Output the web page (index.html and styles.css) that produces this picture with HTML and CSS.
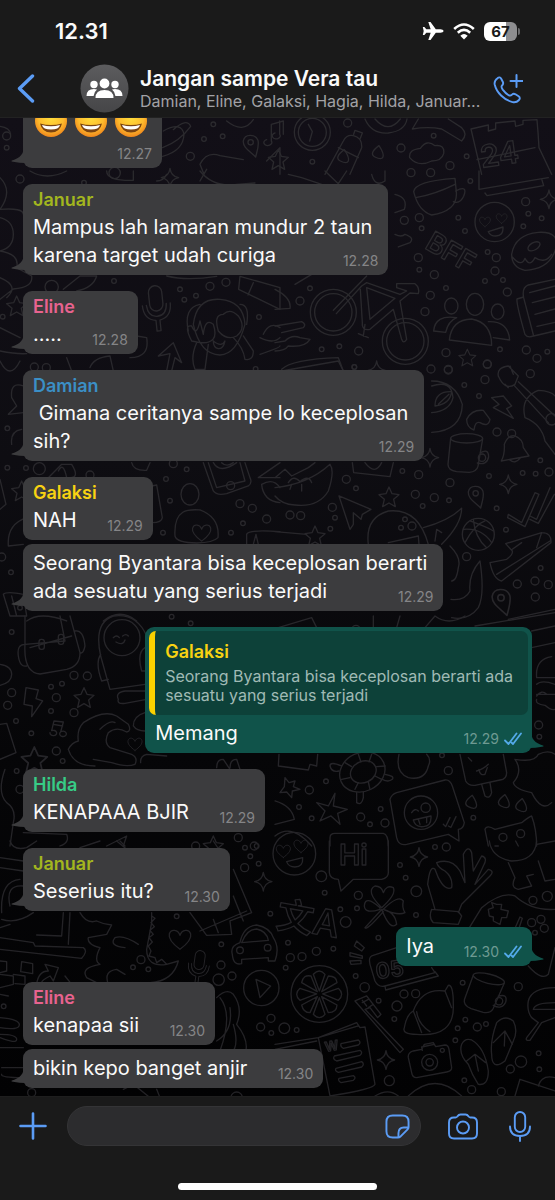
FILE: index.html
```html
<!DOCTYPE html>
<html lang="id">
<head>
<meta charset="utf-8">
<meta name="viewport" content="width=device-width, initial-scale=1">
<title>Jangan sampe Vera tau</title>
<link rel="stylesheet" href="styles.css">
</head>
<body>
<svg class="defs" aria-hidden="true">
  <defs>
    <radialGradient id="face" cx=".5" cy=".4" r=".6"><stop offset="0" stop-color="#ffdc3c"/><stop offset=".65" stop-color="#fdbb2d"/><stop offset="1" stop-color="#f0861c"/></radialGradient>
    <linearGradient id="disc" x1="0" y1="0" x2="0" y2="1"><stop offset="0" stop-color="#5c5c5e"/><stop offset="1" stop-color="#464648"/></linearGradient>
    <symbol id="grin" viewBox="0 0 34 34">
      <circle cx="17" cy="17" r="16" fill="url(#face)"/>
      <path d="M9 13q2-4 5 0M20 13q2-4 5 0" fill="none" stroke="#6b3a10" stroke-width="2" stroke-linecap="round"/>
      <path d="M6 19.500q11 3 22 0q-2 9-11 9T6 19.500z" fill="#7a4312"/>
      <path d="M8 21q9 2.500 18 0q-1 4.500-9 4.500t-9-4.500z" fill="#fff"/>
    </symbol>
    <symbol id="tail" viewBox="0 0 18 22"><path d="M13 0C13 8 9 12 1 14.500Q-.5 15.500 2 15.700Q9 17 14 17L18 20V0z"/></symbol>
    <symbol id="ticks" viewBox="0 0 18 14"><path d="M1 8.500L4.500 12L12.500 1.500M7.500 10.500L9 12L17 1.500" fill="none" stroke="#53a9e8" stroke-width="1.800" stroke-linecap="round" stroke-linejoin="round"/></symbol>
    <marker id="s" markerUnits="userSpaceOnUse" markerWidth="30" markerHeight="30" refX="15" refY="15" orient="0"><circle cx="15" cy="15" r="7" class="ring"/></marker>
    <marker id="m" markerUnits="userSpaceOnUse" markerWidth="40" markerHeight="40" refX="20" refY="20" orient="0"><circle cx="20" cy="20" r="12" class="ring"/></marker>
    <g id="star"><path d="M0-30L9-10L30-7L14 7L19 29L0 18L-19 29L-14 7L-30-7L-9-10z"/></g>
    <g id="spark"><path d="M0-28Q3-4 26 0Q3 4 0 28Q-3 4-26 0Q-3-4 0-28z"/></g>
    <g id="heart"><path d="M0 30C-20 15-36 0-32-16C-27-32-6-30 0-12C6-30 27-32 32-16C36 0 20 15 0 30z"/></g>
    <g id="pin"><path d="M15 36C0 20-24 8-22-12C-18-34 14-34 22-14C26 0 20 16 15 36z"/><circle cy="-8" r="8"/></g>
    <g id="mug"><ellipse cx="0" cy="-48" rx="48" ry="14"/><path d="M-48-48L-56 30Q-56 48-30 52L8 54Q30 52 34 36L48-46M40-4Q66-20 66 8Q60 34 32 26"/><circle cx="46" cy="10" r="11"/></g>
    <g id="mic"><rect x="-20" y="-66" width="40" height="76" rx="20"/><path d="M-42-10Q-42 32-6 38V70H6V38Q42 32 42-10M-30-10Q-28 26 0 26T30-10"/></g>
    <g id="drop"><path d="M0-20Q16 4 12 14T-12 14T0-20z"/></g>
  </defs>
</svg>
<div class="app">
  <header class="top">
    <div class="status">
      <span class="clock">12.31</span>
      <span class="signals">
        <svg width="22" height="20" viewBox="0 0 22 20" fill="#fff" aria-label="Airplane mode"><path d="M21.500 10c0 1-1.500 1.700-3 1.700h-4.700L8.500 19H6.300l2.400-7.300H4.300L2.400 14H.8L1.700 10L.8 6h1.600l1.900 2.300h4.400L6.300 1h2.200l5.300 7.300h4.700c1.500 0 3 .7 3 1.700z"/></svg>
        <svg width="22" height="17" viewBox="0 0 22 17" fill="none" stroke="#fff" stroke-width="2.600" aria-label="Wi-Fi"><path d="M1.200 6Q11-3 20.800 6M4.800 9.800Q11 4 17.200 9.800"/><path d="M11 16.500L7.300 12.700Q11 9.400 14.700 12.700z" fill="#fff" stroke="none"/></svg>
        <span class="battery">67</span>
      </span>
    </div>
    <div class="nav">
      <button class="icon back" aria-label="Back"><svg width="18" height="29" viewBox="0 0 18 29"><path d="M15.500 2L2.500 14.500L15.500 27" stroke-width="3.400"/></svg></button>
      <svg class="avatar" width="49" height="49" viewBox="0 0 49 49" aria-label="Group"><circle cx="24.500" cy="24.500" r="24" fill="url(#disc)"/><g fill="#fff"><circle cx="14" cy="20.500" r="3.700"/><circle cx="35" cy="20.500" r="3.700"/><circle cx="24.500" cy="19.500" r="4.900"/><path d="M15.500 34q0-8 9-8t9 8zM6.500 32q0-7 7.500-7q1.500 0 3 .6q-3 2.400-3.400 6.400zM42.500 32q0-7-7.500-7q-1.500 0-3 .6q3 2.400 3.400 6.400z"/></g></svg>
      <div class="heading"><h1>Jangan sampe Vera tau</h1><p>Damian, Eline, Galaksi, Hagia, Hilda, Januar...</p></div>
      <button class="icon call" aria-label="Add call"><svg width="30" height="30" viewBox="0 0 30 30"><path d="M4.500 4.200C6 2.800 7.300 3.300 8.200 4.800L10 8.200C10.600 9.700 9.800 10.800 8.800 11.800C8 13 8.600 14 9.700 15.600C11.500 18 13.600 20 15.600 21.200C17 22 18 21.600 19 20.600C20.200 19.500 21.200 19.600 22.500 20.300L25.600 22.300C27 23.300 27.200 24.600 26 26C24.200 28 22 28.600 19.600 28.100C11 26 3.500 18.500 1.700 10.500C1.200 8 2.300 5.800 4.500 4.200z" stroke-width="1.900"/><path d="M23.500 1V13M17.500 7H29.500" stroke-width="2"/></svg></button>
    </div>
  </header>

  <main class="chat">
    <svg class="doodles" viewBox="0 117 555 979" preserveAspectRatio="xMidYMin slice" aria-hidden="true">
      <g transform="scale(.3333)">
        <path d="M0 376Q30 380 32 400M490 390Q545 360 552 400Q550 450 488 466M488 440Q540 420 572 376Q560 350 520 386M680 360Q730 400 760 356M800 416a12 9 0 1 0 14 4V370L850 360V400M612 520L600 490Q620 450 660 464L730 476M620 505L600 540M800 480L840 440V520"/>
        <use href="#pin" x="752" y="432"/>
        <polyline class="dots" style="--dot:url(#s)" points="20,440 640,370 668,406 612,414"/>
        <polyline class="dots" style="--dot:url(#m)" points="20,405 571,466"/>
      </g>
      <g transform="translate(275 0) scale(.3333)">
        <circle cx="112" cy="394" r="54"/><circle cx="112" cy="394" r="42"/><path d="M100 370L112 392L104 420"/>
        <path d="M150 520L205 420Q215 400 235 404Q262 410 260 440L225 520M190 440L250 470M236 400L240 388L262 396L256 412M270 354Q290 400 340 396Q390 390 396 354M300 354Q340 400 376 354M430 354L412 384Q460 376 500 384L560 420Q580 400 560 380L520 354M404 470Q400 446 436 442Q456 414 480 434Q510 430 506 458Q500 480 470 480Q430 500 404 470zM588 384L640 372L640 390L662 384V366L720 360L722 376L744 370V358L786 356Q790 400 792 440L830 520M588 384L620 520M606 476L780 440M0 396a12 9 0 1 0 14 4V360"/>
        <use href="#drop" x="312" y="454"/><use href="#drop" x="208" y="466"/><use href="#star" x="10" y="476"/>
        <text x="620" y="500" font-size="92" transform="rotate(-8 620 500)">24</text>
        <polyline class="dots" style="--dot:url(#s)" points="112,482 476,404 575,466"/><polyline class="dots" style="--dot:url(#m)" points="218,366 378,441 525,494"/>
      </g>
      <g transform="translate(0 170) scale(.3333)">
        <path d="M0 20Q40 60 0 115Q70 110 70 130M0 140Q40 150 40 190T0 240Q60 250 50 290L95 315Q100 350 40 354L0 385M0 320Q60 345 20 380M90 0Q140 30 200 0M320 0Q320 30 400 28L400 0M500 10Q490 30 470 30M600 0Q640 50 710 40L765 36M190 355L240 315H290Q280 350 230 360M500 315Q560 330 650 316M0 540Q50 550 80 548M720 316L840 350V415L716 355zM760 335L744 372M0 470L60 500M390 560Q450 560 440 500L410 495M270 590Q280 560 330 555L340 600M200 560L215 600M580 460Q590 380 660 385Q730 390 735 460Q710 550 660 552Q600 550 580 460zM600 400Q550 410 565 480M720 400Q750 400 740 460M575 510Q550 460 575 465Q590 500 600 450L610 490Q615 440 640 460Q660 520 600 515zM655 480Q640 430 670 430Q690 410 715 435Q740 470 710 495Q680 510 655 480M590 515Q570 560 585 595H615L625 520M700 500Q730 530 735 565Q760 570 760 540L730 495M640 510Q665 530 675 510Q670 535 655 533Q640 530 640 510M500 600L510 548L475 555L520 515L545 575L525 560L515 600M780 550Q840 530 840 525M790 490Q810 450 840 470M780 500Q820 520 840 500"/>
        <use href="#mic" x="470" y="410" transform="rotate(-6 470 410)"/><use href="#spark" x="510" y="20"/><use href="#star" x="50" y="405"/>
        <circle cx="344" cy="6" r="17"/>
        <polyline class="dots" style="--dot:url(#s)" points="342,330 540,355 553,386 588,374 8,437 777,438 252,35"/><polyline class="dots" style="--dot:url(#m)" points="60,24 630,346 678,334 103,588 139,590"/><circle cx="155" cy="348" r="20"/>
      </g>
      <g transform="translate(275 170) scale(.3333)">
        <path d="M416 62Q420 30 540 22L544 62Q550 120 470 132Q430 120 416 62M422 80Q480 70 540 40M542 60Q580 40 566 76Q555 100 535 92M612 0V55L820 20M630 66L636 74L806 44L800 24M360 70Q400 80 388 115L360 125M360 190Q380 200 390 190Q420 200 405 215L370 228M40 10L80 20L140 40M150 0L190 38L215 0M290 10Q300 50 330 30V0"/>
        <circle cx="659" cy="153" r="59"/><use href="#heart" transform="translate(630 152) scale(.5)"/><use href="#heart" transform="translate(680 142) scale(.5)"/><path d="M640 182L684 168Q686 195 662 195Q646 195 640 182M710 250Q720 190 790 184Q860 180 840 240Q820 295 750 298Q710 290 710 250zM712 258Q740 290 750 262Q765 290 780 260Q810 280 830 250"/><ellipse cx="777" cy="226" rx="20" ry="11" transform="rotate(-30 777 226)"/>
        <text x="446" y="230" font-size="84" transform="rotate(30 446 230)">BFF</text>
        <circle cx="175" cy="424" r="69"/><circle cx="175" cy="424" r="56"/><circle cx="391" cy="511" r="69"/><circle cx="391" cy="511" r="56"/>
        <path d="M175 418L275 315M184 428L260 345L275 335L375 370L395 360L365 350V338H420Q435 350 430 368L405 366L375 390L395 505Q385 520 380 505L355 415L285 475Q260 480 262 455L256 355M275 350L360 382L285 445zM250 488L280 500M270 460L265 495"/>
        <ellipse cx="529" cy="405" rx="20" ry="24"/><ellipse cx="600" cy="400" rx="26" ry="33"/><ellipse cx="668" cy="422" rx="19" ry="23"/><path d="M523 507Q530 445 590 444Q650 455 650 523zM476 480Q480 430 545 440Q520 450 512 484zM640 452Q700 450 704 507L655 500"/>
        <path d="M840 325L760 342Q740 350 746 380L776 495L840 480M746 378L726 384Q724 400 750 490Q758 502 776 495M764 365L840 345M772 395L840 378M780 430L840 414M786 466L840 454M0 355Q50 380 45 412L0 415M0 465L80 452Q95 460 85 470L20 485M0 540Q30 540 40 525Q90 530 105 505L75 500Q50 490 30 510L0 515M20 595Q50 565 190 560L205 600M60 340L110 310"/>
        <use href="#spark" x="822" y="85"/><use href="#star" transform="translate(577 560) scale(.85)"/><use href="#spark" x="305" y="598"/>
        <polyline class="dots" style="--dot:url(#s)" points="586,30 440,172 570,180 550,140 760,128 800,142 745,166 638,243 433,296 630,330 684,327 513,351 105,352 140,535 193,526 675,535 238,588 817,542"/><polyline class="dots" style="--dot:url(#m)" points="388,148 433,140 752,92 430,260 664,260 478,311 660,300 466,373 450,422 697,363 75,390 251,540 513,545 637,579 754,537 786,562 520,595 408,5 467,5"/>
      </g>
      <g transform="translate(0 360) scale(.3333)">
        <path d="M0 0Q30 60 60 0M70 75Q30 60 35 110L50 135L25 160L70 155M35 250Q30 210 65 205M145 350L185 310H215Q240 350 210 350M175 330Q190 300 200 350M395 305Q400 330 440 328L450 305M610 305L640 390Q650 405 680 398L745 375Q758 365 750 350L735 305M625 305L650 380L735 360L720 305M0 355L18 430L0 445M25 555Q20 490 80 470M25 555L70 550M455 375L470 372L487 470Q485 485 457 485M640 305Q660 340 710 305M665 305Q680 320 700 305M775 350L840 305M775 350H840M785 370Q820 350 840 380M785 370Q790 420 840 425M740 550V520Q745 505 840 512M760 550L768 520L775 550M10 700Q20 690 70 700L80 765L30 765zM35 705L50 765M525 525C520 440 570 445 600 447Q660 470 654 530Q640 545 590 546Q530 545 525 525M80 780Q120 750 200 780M310 780Q360 740 410 780"/>
        <ellipse cx="570" cy="400" rx="27" ry="32"/><use href="#heart" transform="translate(605 515) scale(.85)"/><use href="#star" x="65" y="390"/>
        <polyline class="dots" style="--dot:url(#s)" points="22,202 22,320 78,321 498,354 560,325 510,419 489,515 693,515 729,487 33,634 767,24 60,740"/><polyline class="dots" style="--dot:url(#m)" points="270,342 520,308 720,428 757,442 800,474 5,588 692,374"/><circle cx="118" cy="323" r="18"/>
      </g>
      <g transform="translate(275 360) scale(.3333)">
        <path d="M20 30L190 0L205 30M670 45Q665 20 700 15L730 45L720 70Q690 90 670 45M705 15L715 40M690 70L700 80M730 62L840 165M718 74L820 185M750 170Q735 110 790 88Q830 90 840 105M750 170Q800 190 810 240L840 280M470 60Q540 60 562 130Q560 210 470 214M470 75Q530 55 534 110Q525 150 470 155M480 135Q480 90 530 92Q525 130 480 135M490 130L522 100M650 110L685 105L710 135L695 143L715 172L655 140L672 130zM575 175Q590 145 625 148L645 175Q640 200 615 185Q600 180 597 207Q575 200 575 175zM679 300Q690 280 688 250Q700 220 720 225Q745 235 745 260L762 285zM705 297Q720 310 735 292M0 380Q100 370 165 310Q180 330 160 390Q130 440 60 432Q20 430 0 405M0 350L30 325L50 345L100 320L120 305M40 365Q55 340 75 362Q100 340 110 365M45 385L50 370M80 390V370M232 305L236 335L345 347L355 305M270 305Q300 345 320 305M192 405L288 445L262 460L258 475L235 455V490L225 505zM700 460L740 485L780 395L792 400L750 497L698 470zM765 465L785 475L825 380M765 475L790 487L838 400M280 550Q270 470 340 450Q430 440 460 550M340 545L430 525L432 550M445 500Q520 480 560 442Q560 490 500 550M480 540L485 505L500 515M645 605L695 595Q715 580 712 570L692 548L800 515Q830 515 828 545L680 660Q655 655 645 605zM665 640L825 540M712 565L740 545M800 515L785 560M0 512L95 520M525 555Q560 590 550 620Q545 660 530 660M528 715Q570 720 585 690Q580 640 615 600Q630 700 610 740Q580 780 530 770M700 775L840 745"/>
        <circle cx="710" cy="218" r="12"/><circle cx="830" cy="175" r="17"/><use href="#mug" x="575" y="280"/><use href="#spark" x="465" y="290"/><use href="#spark" x="700" y="370"/><use href="#star" x="342" y="408"/><use href="#star" x="120" y="525"/><use href="#pin" x="602" y="405"/><use href="#pin" transform="translate(678 720) scale(1.200)"/>
        <circle cx="610" cy="520" r="48"/><path d="M565 505Q620 500 650 545M570 545Q600 490 630 480M595 475Q600 530 635 560M585 480Q640 500 655 510"/>
        <polyline class="dots" style="--dot:url(#s)" points="238,18 568,72 612,105 642,345 743,336 782,338 796,298 382,330 243,382 522,418 443,435 665,442 180,470 166,503 390,475 378,500 693,506 797,621"/><polyline class="dots" style="--dot:url(#m)" points="468,24 520,27 637,10 630,56 766,38 666,213 431,341 525,365 421,400 478,410 214,355 172,439 45,462 77,464 411,495 575,587 727,669 780,660 820,671 781,708 822,333"/>
      </g>
      <g transform="translate(0 615) scale(.3333)">
        <path d="M75 0V85L195 75L180 0M75 85Q70 170 120 174L200 160Q240 150 240 110L210 0M75 85Q50 85 55 120Q60 155 80 150M225 45Q250 40 255 90Q250 115 240 110M90 95L215 60M302 120Q280 20 340 0Q410-10 440 60M302 120L330 220L435 205M302 115Q285 140 305 195L325 190M435 95Q410 110 425 165H435M355 250Q345 230 375 225H440M375 262Q350 265 355 250M375 262L440 250M340 65Q350 55 358 65M368 60Q378 52 385 60M348 78Q370 90 375 72M78 215L115 222L108 248L128 255L95 302L97 270L72 265zM150 350a10 8 0 1 0 5-6L162 315L190 318L182 348a10 8 0 1 0 4-2M160 325L188 330M285 450Q220 450 205 400Q215 380 235 375Q230 340 250 320Q310 280 350 300L385 325Q395 345 380 348Q350 330 325 350Q310 380 330 395L395 415Q415 425 405 445Q380 455 335 440L280 430M300 340Q330 310 345 320M435 290Q400 300 400 330Q410 345 435 345M422 440Q420 420 440 415L500 420M0 145Q35 150 35 175T0 208M0 325L20 322L48 410L0 430M15 460Q-10 530 20 560Q50 580 40 620L30 690M70 650L200 655Q210 680 180 690M320 690L380 660L370 690M650 455Q650 430 670 430L690 460M690 455Q690 430 710 430L720 460"/>
        <rect x="117" y="70" width="16" height="30" rx="7"/><rect x="175" y="55" width="16" height="30" rx="7"/><circle cx="366" cy="65" r="54"/>
        <use href="#star" x="252" y="245"/><use href="#star" transform="translate(103 432) scale(1.300)"/><use href="#heart" transform="translate(405 384) scale(.65)"/><use href="#star" x="640" y="690"/>
        <polyline class="dots" style="--dot:url(#s)" points="35,48 153,212 186,203 153,285 48,315 94,352 188,435 50,465 515,2 572,22 770,690"/><polyline class="dots" style="--dot:url(#m)" points="35,230 23,268 222,178 262,180 169,245 222,290 169,405 715,665 60,520"/>
      </g>
      <g transform="translate(275 615) scale(.3333)">
        <path d="M10 35L110 5L125 35M295 35V0M365 35L375 0M450 35L480 0Q520 30 570 0M600 30L840-10M770 45L840 30M770 95L840 80M785 185Q780 130 830 122M785 185H840M785 205Q800 190 840 205M785 235H840M785 240Q800 220 815 235M785 250Q780 265 810 268Q830 285 840 280M12 415L10 450L100 462L105 445L125 450L128 415M372 415Q360 470 400 485Q450 495 460 450Q470 430 455 415M555 415L572 495Q580 510 600 508L675 492Q695 490 695 470L685 415M605 465Q625 460 640 445M612 460Q615 480 630 475L637 455M580 425L590 435M620 505L630 540Q645 550 650 530L645 500M720 430Q780 440 790 415Q820 400 840 415M720 430Q745 465 715 500Q720 520 770 530Q800 590 830 560M345 550Q350 535 365 530L510 492Q525 490 532 510L568 620Q565 640 550 640L552 675L520 655L395 685Q370 690 365 665zM410 590Q420 575 430 585M415 612L468 600Q470 630 445 632Q420 635 415 612M430 610L435 625M455 605V620M505 625L512 632L525 605M520 630L528 634L543 602M165 690V665Q165 652 180 652H325Q340 655 340 690M0 555Q50 570 58 610L0 625M0 660Q50 620 110 690M640 690L630 640Q635 625 660 640L740 620Q765 600 770 600Q785 640 785 690M722 675L730 690"/>
        <ellipse cx="262" cy="468" rx="70" ry="58" transform="rotate(-25 262 468)"/><ellipse cx="265" cy="468" rx="40" ry="32" transform="rotate(-25 265 468)"/><path d="M165 450Q165 435 200 450M165 450Q170 470 192 465M330 475Q360 480 352 490Q340 500 322 490M245 530V560Q260 570 265 545V528M210 440L230 452M200 490L225 485M240 520L250 500M285 520L280 498M320 490L300 480M330 450L305 452M250 415L258 438M290 415L282 438"/>
        <path d="M30 485L42 500L60 495L55 512L75 520L52 525L50 545L35 528L15 530L28 512zM180 532L175 570L217 580L188 592L195 625L168 600L135 615L150 585L125 560L160 570z"/>
        <circle cx="438" cy="590" r="50"/><circle cx="452" cy="575" r="14"/><circle cx="684" cy="664" r="12"/><circle cx="737" cy="653" r="12"/>
        <use href="#drop" x="592" y="558"/><use href="#drop" x="690" y="556"/><use href="#drop" x="742" y="568"/>
        <polyline class="dots" style="--dot:url(#s)" points="153,496 72,573 110,607 285,625 317,579 595,605 501,418 793,362"/><polyline class="dots" style="--dot:url(#m)" points="103,522 520,464 330,621 791,327 257,603 243,40"/>
      </g>
      <g transform="translate(0 840) scale(.3333)">
        <path d="M30 0Q40 30 80 20L110 0M240 20L300 0M350 0L380 25M360 0L375 15M0 50L70 60M0 80L70 90M0 290L100 305L105 315L250 320Q265 330 245 352L0 325M190 215L185 285L110 282M210 215L205 310M5 215Q0 120 60 115M30 195Q15 130 70 135M5 235Q50 250 100 215M0 260L30 250M240 215Q260 250 290 240Q310 250 335 252L320 280L265 290Q260 310 300 320Q280 360 300 370Q240 380 260 410L300 430M415 310Q370 280 345 290Q325 315 375 320M325 430Q310 390 350 385L375 400M455 215V245L440 325Q440 380 500 370L535 360Q520 420 450 425M455 225L465 232L453 245L463 257L450 268L460 280L447 290L457 303L445 315L453 330L447 345L465 350L470 365L485 355L500 370M0 360L20 362V390L0 395M65 362L98 368V398L62 392zM0 400L40 405V430L0 440M40 400L75 405V430L45 428M0 460L25 465M135 370L175 380L160 420L150 405Q120 420 125 430H110Q115 390 145 390zM195 405L215 430M0 530Q60 535 58 552T0 560M0 580Q50 580 50 595T0 590M0 620H70M5 680H70M5 700Q0 710 70 710M640 0L660 30M700 85L755 215L690 240L695 280L620 283L570 215M600 270L740 210M640 235L655 275M700 165L730 240M650 470Q680 440 700 460Q730 500 710 550Q750 600 735 640M700 550Q720 620 690 640M660 470Q700 520 660 630M650 600Q700 570 690 500M80 430L130 435M370 745L400 730L450 770M470 745L480 770"/>
        <use href="#heart" x="540" y="295"/><use href="#mic" transform="translate(596 378) scale(.75) rotate(8)"/><use href="#spark" x="790" y="122"/>
        <circle cx="784" cy="441" r="53"/><path d="M768 415L812 435L780 470zM697 340Q690 315 720 305Q730 255 770 252Q810 260 820 290Q840 320 825 360H805V350L725 355V368Q700 375 697 340zM725 305Q740 265 770 264Q800 270 805 298z"/><circle cx="720" cy="328" r="10"/><circle cx="803" cy="320" r="10"/>
        <polyline class="dots" style="--dot:url(#s)" points="530,226 399,379 445,385 751,46 776,68 811,218 664,310 11,496 814,576 735,20"/><polyline class="dots" style="--dot:url(#m)" points="423,356 663,372 696,405 734,80 782,558 763,15 587,15 813,532 95,755"/><circle cx="656" cy="416" r="17"/><circle cx="710" cy="770" r="17"/>
      </g>
      <g transform="translate(275 840) scale(.3333)">
        <circle cx="58" cy="38" r="64"/><use href="#heart" transform="translate(25 30) scale(.65)"/><use href="#heart" transform="translate(78 15) scale(.65)"/><path d="M35 62L83 50Q85 78 60 78Q40 78 35 62M163 0V95Q165 115 190 115L198 150L235 115H320Q340 110 340 95V0"/>
        <text x="192" y="72" font-size="86">Hi</text><text x="0" y="258" font-size="110" transform="rotate(10 0 258)">文A</text><text x="305" y="415" font-size="66" transform="rotate(-8 305 415)">05</text><text x="152" y="632" font-size="40" transform="rotate(-10 152 632)">W</text>
        <path d="M320 200Q270 150 300 135Q320 135 325 155Q335 130 355 140Q365 160 320 200zM325 205Q370 160 385 180Q380 200 390 215Q370 225 325 205zM320 205Q345 270 365 250Q360 210 320 205zM315 200Q270 160 268 195Q270 220 315 205zM318 208L270 260Q275 270 325 212"/>
        <path d="M480 205L458 130Q465 70 480 85L490 110Q510 150 530 140Q535 110 510 90Q490 80 485 65Q530 50 555 90L570 125M570 125L565 40Q580 10 590 35L595 90L620 45Q640 50 625 75L600 130L640 85Q660 90 645 105L560 190L550 215M470 205L550 212L560 225L550 250L475 245Q460 230 470 205M643 0Q650 50 710 60Q780 60 785 0M700 65L720 110Q705 140 730 145L770 135L755 105L775 100M790 60L810 120L840 115M785 10L840 0M660 15H670M580 265L620 200Q680 150 720 165Q770 210 840 205M760 375Q800 420 820 400L840 320M640 205L655 200L650 185L665 190L680 190L678 205L700 210L695 230L680 230L675 250L655 240L655 228L643 225zM720 262L735 228L742 232L732 262"/>
        <path d="M365 320L290 345Q280 350 285 370L300 420Q310 440 330 435L480 395L470 380M330 435L332 447L490 405L480 392M245 300L268 320L260 330L238 315zM225 335L262 345V352L225 345zM225 360L258 358V368L228 370z"/>
        <circle cx="133" cy="459" r="85"/><path d="M133 450L115 400Q133 380 150 400zM133 470L115 520Q133 540 150 520zM125 459L75 442Q55 459 75 478zM143 459L190 442Q210 459 190 478zM127 452L80 425Q85 400 108 405zM140 452L160 405Q185 405 186 425zM127 467L80 492Q85 515 105 515zM140 467L186 492Q185 515 160 515z"/>
        <path d="M240 480L275 465L318 520L308 530L285 500L270 505L385 625L375 635zM262 478L275 495M280 475L262 485M295 490L280 500M388 560Q380 580 425 580Q540 590 535 490Q535 430 520 433L510 450Q440 440 415 510Q395 520 388 560zM415 510L440 575M510 450L530 500M425 512Q430 550 465 572M0 610L130 590L165 765M0 625L125 600M130 590L245 545L255 560L270 558L300 730Q295 745 165 765M130 590L250 555M198 608L250 597Q260 605 250 612L205 622Q195 618 198 608zM178 645L255 628Q265 635 255 643L185 660Q172 655 178 645zM183 682L260 662Q270 670 260 678L190 694Q178 690 183 682zM192 712L235 704Q245 710 235 718L198 725Q188 720 192 712zM400 650Q398 635 415 630L440 625L448 610L475 605L482 617L510 612Q520 612 522 625L530 680Q530 690 515 693L425 710Q412 710 410 695zM442 628L440 618L478 610"/>
        <circle cx="464" cy="664" r="24"/><circle cx="464" cy="664" r="11"/><circle cx="502" cy="628" r="6"/>
        <path d="M560 610Q570 590 590 597Q630 620 640 690Q640 735 610 730Q590 700 580 670Q550 640 560 610zM575 660L600 640L632 665M600 640L610 690M665 545Q690 520 715 540Q730 570 715 600L690 660Q650 690 650 640Q645 600 665 545zM655 605L690 570L712 610M690 570L688 615"/>
        <use href="#mug" transform="translate(630 460) rotate(14)"/><path d="M840 440Q770 440 760 480Q755 510 770 530L790 545L755 590Q750 600 765 598L800 545L840 530M840 485Q780 485 775 505H840M735 715L840 750M735 715L720 765M790 735Q800 700 840 710M400 765Q480 690 560 765M300 765Q340 740 370 765"/>
        <use href="#spark" x="432" y="48"/><use href="#spark" x="333" y="657"/>
        <polyline class="dots" style="--dot:url(#s)" points="480,18 375,72 392,110 149,155 196,205 246,202 423,222 39,305 32,380 175,323 310,290 242,405 311,479 358,534 563,425 571,536 541,598 548,562 633,549 568,718 791,637 793,685 65,567 780,275"/><polyline class="dots" style="--dot:url(#m)" points="514,18 250,163 774,178 46,350 81,347 124,331 387,459 422,458 730,437 607,558 706,684 590,746 679,752 770,245 798,235 808,262"/><circle cx="139" cy="106" r="16"/><circle cx="424" cy="151" r="16"/><circle cx="212" cy="243" r="16"/><circle cx="269" cy="439" r="14"/><circle cx="366" cy="495" r="15"/><circle cx="28" cy="562" r="16"/><circle cx="738" cy="662" r="17"/><circle cx="343" cy="719" r="15"/><circle cx="817" cy="166" r="15"/>
      </g>
    </svg>

    <div class="messages">
      <article class="bubble in">
        <div class="body"><p class="text faces" role="img" aria-label="😄😄😄"><svg><use href="#grin"/></svg><svg><use href="#grin"/></svg><svg><use href="#grin"/></svg></p><time class="time">12.27</time></div>
        <svg class="tail"><use href="#tail"/></svg>
      </article>
      <article class="bubble in">
        <h2 class="name lime">Januar</h2>
        <div class="body"><p class="text">Mampus lah lamaran mundur 2 taun<br>karena target udah curiga</p><time class="time">12.28</time></div>
        <svg class="tail"><use href="#tail"/></svg>
      </article>
      <article class="bubble in">
        <h2 class="name pink">Eline</h2>
        <div class="body"><p class="text">.....</p><time class="time">12.28</time></div>
        <svg class="tail"><use href="#tail"/></svg>
      </article>
      <article class="bubble in">
        <h2 class="name blue">Damian</h2>
        <div class="body"><p class="text">&nbsp;Gimana ceritanya sampe lo keceplosan<br>sih?</p><time class="time">12.29</time></div>
        <svg class="tail"><use href="#tail"/></svg>
      </article>
      <article class="bubble in">
        <h2 class="name yellow">Galaksi</h2>
        <div class="body"><p class="text">NAH</p><time class="time">12.29</time></div>
      </article>
      <article class="bubble in follow">
        <div class="body"><p class="text">Seorang Byantara bisa keceplosan berarti<br>ada sesuatu yang serius terjadi</p><time class="time">12.29</time></div>
        <svg class="tail"><use href="#tail"/></svg>
      </article>
      <article class="bubble out reply">
        <blockquote class="quote">
          <h2 class="name yellow">Galaksi</h2>
          <p>Seorang Byantara bisa keceplosan berarti ada<br>sesuatu yang serius terjadi</p>
        </blockquote>
        <div class="body"><p class="text">Memang</p><time class="time">12.29 <svg class="ticks"><use href="#ticks"/></svg></time></div>
        <svg class="tail"><use href="#tail"/></svg>
      </article>
      <article class="bubble in">
        <h2 class="name green">Hilda</h2>
        <div class="body"><p class="text">KENAPAAA BJIR</p><time class="time">12.29</time></div>
        <svg class="tail"><use href="#tail"/></svg>
      </article>
      <article class="bubble in">
        <h2 class="name lime">Januar</h2>
        <div class="body"><p class="text">Seserius itu?</p><time class="time">12.30</time></div>
        <svg class="tail"><use href="#tail"/></svg>
      </article>
      <article class="bubble out">
        <div class="body"><p class="text">Iya</p><time class="time">12.30 <svg class="ticks"><use href="#ticks"/></svg></time></div>
        <svg class="tail"><use href="#tail"/></svg>
      </article>
      <article class="bubble in">
        <h2 class="name pink">Eline</h2>
        <div class="body"><p class="text">kenapaa sii</p><time class="time">12.30</time></div>
      </article>
      <article class="bubble in follow">
        <div class="body"><p class="text">bikin kepo banget anjir</p><time class="time">12.30</time></div>
        <svg class="tail"><use href="#tail"/></svg>
      </article>
    </div>
  </main>

  <footer class="composer">
    <div class="tools">
      <button class="icon plus" aria-label="Attach"><svg width="28" height="28" viewBox="0 0 28 28"><path d="M14 1.500V26.500M1.500 14H26.500" stroke-width="2.600"/></svg></button>
      <div class="field">
        <input type="text" aria-label="Message">
        <button class="icon" aria-label="Stickers"><svg width="25" height="25" viewBox="0 0 26 26"><path d="M8 1.500H18Q24.500 1.500 24.500 8V13.500Q24.500 15 23.500 16L16 23.500Q15 24.500 13.500 24.500H8Q1.500 24.500 1.500 18V8Q1.500 1.500 8 1.500zM14 24V20Q14 14 19.500 14H24.500" stroke-width="2"/></svg></button>
      </div>
      <button class="icon" aria-label="Camera"><svg width="30" height="27" viewBox="0 0 30 27"><path d="M6 4.500H7.500Q8.500 4.500 9.300 3.500Q10.700 1.500 12.500 1.500H17.500Q19.300 1.500 20.700 3.500Q21.500 4.500 22.500 4.500H24Q29 4.500 29 9.500V20.500Q29 25.500 24 25.500H6Q1 25.500 1 20.500V9.500Q1 4.500 6 4.500z" stroke-width="1.900"/><circle cx="15" cy="14.500" r="6" stroke-width="1.900"/></svg></button>
      <button class="icon" aria-label="Voice message"><svg width="22" height="31" viewBox="0 0 22 31"><rect x="5.800" y="1" width="10.400" height="20" rx="5.200" stroke-width="1.900"/><path d="M1 15.500Q1 25 11 25T21 15.500M11 25V30" stroke-width="1.900"/></svg></button>
    </div>
    <div class="home"></div>
  </footer>
</div>
</body>
</html>
```
FILE: styles.css
```css
* { box-sizing: border-box; margin: 0; padding: 0; }

body {
  background: #1a1a1a;
  color: #fafafa;
  font-family: Inter, "Liberation Sans", sans-serif;
  font-variant-ligatures: no-contextual;
}

.defs { position: absolute; width: 0; height: 0; }

.app { display: flex; flex-direction: column; height: 100vh; }

.icon {
  display: flex;
  align-items: center;
  justify-content: center;
  border: 0;
  background: none;
}

.icon svg {
  fill: none;
  stroke: #5b9cf5;
  stroke-linecap: round;
  stroke-linejoin: round;
}

/* header */
.top { flex: none; background: #1a1a1a; border-bottom: 1px solid #222; }

.status {
  display: flex;
  justify-content: space-between;
  align-items: center;
  height: 60px;
  padding: 2px 38px 0 55px;
}

.clock { font-size: 22px; font-weight: 600; }
.signals { display: flex; align-items: center; gap: 9px; }

.battery {
  position: relative;
  width: 33px;
  height: 19px;
  border-radius: 6px;
  background: linear-gradient(to right, #fff 67%, #8e8e90 67%);
  color: #1a1a1a;
  font-size: 15px;
  font-weight: 700;
  line-height: 19px;
  text-align: center;
}

.battery::after {
  content: "";
  position: absolute;
  top: 6px;
  right: -3px;
  width: 2px;
  height: 7px;
  border-radius: 0 2px 2px 0;
  background: #6a6a6c;
}

.nav { display: flex; align-items: center; height: 57px; padding: 0 32px 0 17px; }
.avatar { flex: none; margin: 0 11px 0 45px; }
.heading { flex: 1; min-width: 0; white-space: nowrap; }
.heading h1 { font-size: 21px; font-weight: 600; line-height: 24px; }
.heading p { overflow: hidden; color: #a2a2a6; font-size: 16px; line-height: 20px; }

/* conversation */
.chat {
  position: relative;
  flex: 1;
  min-height: 0;
  overflow: hidden;
  background: linear-gradient(#120f17, #0e0d12 35%, #060608 65%, #020203);
}

.doodles {
  position: absolute;
  inset: 0;
  width: 100%;
  height: 100%;
  fill: none;
  stroke: #2b2a2e;
  stroke-width: 4;
  stroke-linejoin: round;
  stroke-linecap: round;
  mask-image: linear-gradient(#000, rgba(0, 0, 0, 0.8));
}

.doodles text {
  font-family: Inter, "Noto Sans CJK SC", sans-serif;
  font-weight: 600;
}

.ring { fill: none; stroke: #2b2a2e; stroke-width: 4; }
.dots { stroke: none; marker: var(--dot); }

.messages {
  position: relative;
  display: flex;
  flex-direction: column;
  justify-content: flex-end;
  gap: 16px;
  height: 100%;
  padding: 0 23px 8px;
}

.bubble {
  --fill: #3c3c3e;
  position: relative;
  flex: none;
  align-self: flex-start;
  padding: 5px 10px 6px;
  border-radius: 9px;
  background: var(--fill);
}

.bubble.out { --fill: #10534a; align-self: flex-end; }
.bubble.follow { margin-top: -12px; }
.bubble:has(> .name) { padding-top: 3px; }

.tail {
  position: absolute;
  left: -12px;
  bottom: 0;
  width: 18px;
  height: 22px;
  fill: var(--fill);
}

.out .tail { left: auto; right: -12px; transform: scaleX(-1); }

.name { font-size: 18px; font-weight: 600; line-height: 26px; }
.lime { color: #a3b61e; }
.pink { color: #e8638f; }
.blue { color: #3b8fc6; }
.yellow { color: #f8d212; }
.green { color: #37cc86; }

.body { display: grid; }
.text, .time { grid-area: 1 / 1; }
.text { padding-right: 6px; font-size: 20px; line-height: 28px; }
.text::after { content: ""; display: inline-block; width: 60px; }
.out .text::after { width: 82px; }

.time {
  display: flex;
  align-items: center;
  gap: 5px;
  align-self: end;
  justify-self: end;
  color: #858587;
  font-size: 14px;
  line-height: 16px;
}

.out .time { color: #6e9a92; }
.ticks { width: 18px; height: 14px; }

.faces { display: flex; gap: 6px; padding: 0 4px 24px 1px; }
.faces::after { content: none; }
.faces svg { width: 34px; height: 34px; }

.reply { padding: 4px 4px 6px; }
.reply .body { padding: 4px 6px 0; }

.quote {
  padding: 8px 15px 10px 10px;
  border-left: 6px solid #fad100;
  border-radius: 7px;
  background: #0d4139;
}

.quote .name { margin-bottom: 2px; }
.quote p { color: #a0bab5; font-size: 16px; line-height: 19px; }

/* composer */
.composer { flex: none; background: #1a1a1a; border-top: 1px solid #1e1e1e; }

.tools {
  display: flex;
  align-items: center;
  gap: 31px;
  padding: 9px 24px 0 19px;
}

.plus { margin-right: -11px; }

.field {
  display: flex;
  align-items: center;
  flex: 1;
  min-width: 0;
  height: 40px;
  margin-right: -4px;
  padding: 0 10px 0 16px;
  border: 1px solid #343436;
  border-radius: 20px;
  background: #2c2c2e;
}

.field input {
  flex: 1;
  min-width: 0;
  border: 0;
  outline: 0;
  background: none;
  color: inherit;
  font: inherit;
  font-size: 20px;
}

.home {
  width: 36%;
  height: 7px;
  margin: 37px auto 10px;
  border-radius: 4px;
  background: #fff;
}
```
